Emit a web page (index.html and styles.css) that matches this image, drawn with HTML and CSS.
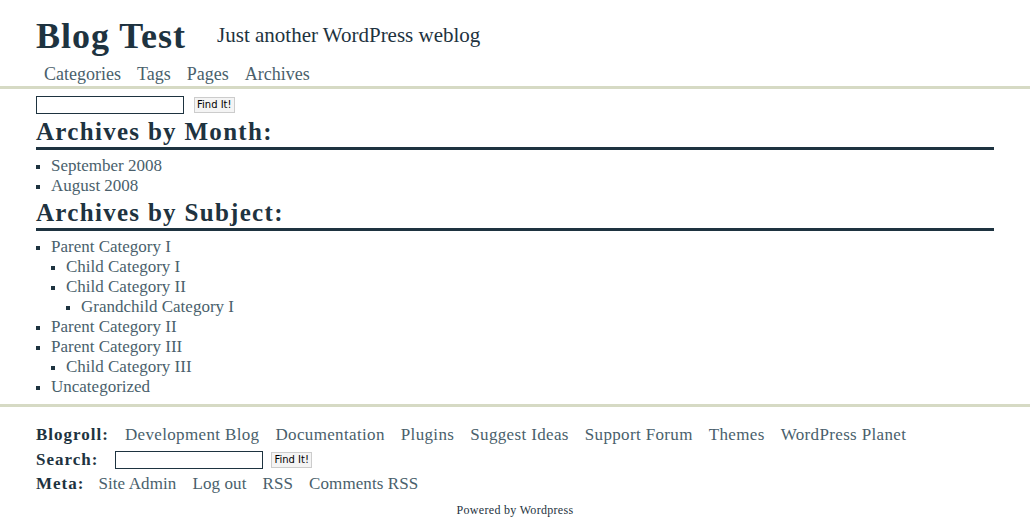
FILE: index.html
```html
<!DOCTYPE html>
<html>
<head>
<meta charset="utf-8">
<link rel="stylesheet" href="styles.css">
</head>
<body>
<div class="header">
  <div class="brand">
    <h1 class="title">Blog Test</h1>
    <span class="tagline">Just another WordPress weblog</span>
  </div>
  <ul class="nav">
    <li><a href="#">Categories</a></li>
    <li><a href="#">Tags</a></li>
    <li><a href="#">Pages</a></li>
    <li><a href="#">Archives</a></li>
  </ul>
</div>
<div class="content">
  <form class="search">
    <input type="text" class="field">
    <button type="button" class="btn">Find It!</button>
  </form>
  <h2 class="section">Archives by Month:</h2>
  <ul class="list">
    <li><a href="#">September 2008</a></li>
    <li><a href="#">August 2008</a></li>
  </ul>
  <h2 class="section">Archives by Subject:</h2>
  <ul class="list">
    <li><a href="#">Parent Category I</a>
      <ul class="list">
        <li><a href="#">Child Category I</a></li>
        <li><a href="#">Child Category II</a>
          <ul class="list">
            <li><a href="#">Grandchild Category I</a></li>
          </ul>
        </li>
      </ul>
    </li>
    <li><a href="#">Parent Category II</a></li>
    <li><a href="#">Parent Category III</a>
      <ul class="list">
        <li><a href="#">Child Category III</a></li>
      </ul>
    </li>
    <li><a href="#">Uncategorized</a></li>
  </ul>
</div>
<div class="footer">
  <div class="frow">
    <span class="flabel">Blogroll:</span>
    <a href="#">Development Blog</a>
    <a href="#">Documentation</a>
    <a href="#">Plugins</a>
    <a href="#">Suggest Ideas</a>
    <a href="#">Support Forum</a>
    <a href="#">Themes</a>
    <a href="#">WordPress Planet</a>
  </div>
  <div class="frow frow-search">
    <span class="flabel">Search:</span>
    <input type="text" class="field">
    <button type="button" class="btn">Find It!</button>
  </div>
  <div class="frow frow-meta">
    <span class="flabel">Meta:</span>
    <a href="#">Site Admin</a>
    <a href="#">Log out</a>
    <a href="#">RSS</a>
    <a href="#">Comments RSS</a>
  </div>
  <p class="powered">Powered by Wordpress</p>
</div>
</body>
</html>
```
FILE: styles.css
```css
html, body {
  margin: 0;
  padding: 0;
  background: #fff;
}
body {
  font-family: "Liberation Serif", "Times New Roman", serif;
  color: #1e3340;
}
a {
  color: #4a5f6c;
  text-decoration: none;
}
.header {
  border-bottom: 3px solid #d6dac4;
}
.brand {
  display: flex;
  align-items: flex-start;
  gap: 31px;
  padding: 15px 36px 0;
  height: 42px;
}
.title {
  margin: 0;
  font-size: 36px;
  font-weight: bold;
  letter-spacing: 1px;
  line-height: 42px;
  color: #1e3340;
}
.tagline {
  margin-top: 8px;
  font-size: 21px;
  line-height: 24px;
  color: #1e3340;
}
.nav {
  display: flex;
  gap: 16px;
  list-style: none;
  margin: 0;
  padding: 7px 44px 2px;
  font-size: 18px;
  line-height: 20px;
}
.content {
  padding: 7px 36px 7px;
}
.search {
  display: flex;
  align-items: center;
  gap: 10px;
  margin: 0 0 1px;
  height: 18px;
}
.field {
  width: 148px;
  height: 18px;
  box-sizing: border-box;
  border: 1px solid #1e3340;
  margin: 0;
  padding: 0;
}
.btn {
  font-family: "DejaVu Sans", "Liberation Sans", sans-serif;
  font-size: 10px;
  height: 16px;
  padding: 0 2px;
  border: 1px solid #ccc;
  background: #f4f4f4;
  color: #000;
  line-height: 14px;
}
.section {
  margin: 0 0 6px;
  padding-top: 1px;
  font-size: 25px;
  font-weight: bold;
  letter-spacing: 1.3px;
  line-height: 31px;
  border-bottom: 3px solid #1e3340;
}
.list {
  margin: 0;
  padding: 0 0 0 15px;
  list-style: square;
  font-size: 17px;
  line-height: 20px;
}
.list li::marker {
  font-size: 13px;
  color: #1e3340;
}
.footer {
  border-top: 3px solid #d6dac4;
  padding: 16px 36px 0;
}
.frow {
  display: flex;
  align-items: center;
  gap: 16px;
  font-size: 17px;
  line-height: 24px;
}
.frow a {
  letter-spacing: 0.35px;
}
.frow-search {
  margin-top: 1px;
}
.frow-meta a {
  letter-spacing: 0.1px;
}
.frow-meta .flabel {
  margin-right: -2px;
}
.flabel {
  font-weight: bold;
  letter-spacing: 1px;
  color: #1e3340;
}
.frow .field {
  margin-left: 1px;
}
.frow .btn {
  margin-left: -8px;
}
.powered {
  margin: 7px 0 0;
  text-align: center;
  font-size: 12px;
  letter-spacing: 0.3px;
  color: #1e3340;
}
```
